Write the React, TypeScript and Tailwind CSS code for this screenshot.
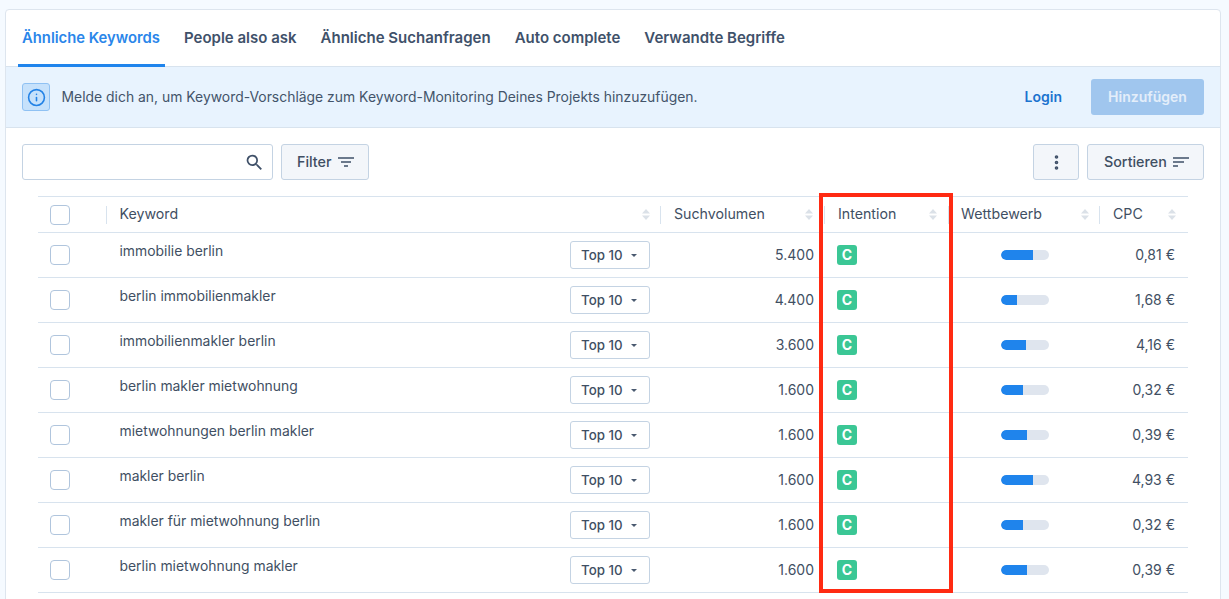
import { EllipsisVertical, Info } from "lucide-react";

const tabs = ["People also ask", "Ähnliche Suchanfragen", "Auto complete", "Verwandte Begriffe"];

const rows = [
  { keyword: "immobilie berlin", volume: "5.400", competition: 32, cpc: "0,81 €" },
  { keyword: "berlin immobilienmakler", volume: "4.400", competition: 16, cpc: "1,68 €" },
  { keyword: "immobilienmakler berlin", volume: "3.600", competition: 25, cpc: "4,16 €" },
  { keyword: "berlin makler mietwohnung", volume: "1.600", competition: 22, cpc: "0,32 €" },
  { keyword: "mietwohnungen berlin makler", volume: "1.600", competition: 26, cpc: "0,39 €" },
  { keyword: "makler berlin", volume: "1.600", competition: 32, cpc: "4,93 €" },
  { keyword: "makler für mietwohnung berlin", volume: "1.600", competition: 22, cpc: "0,32 €" },
  { keyword: "berlin mietwohnung makler", volume: "1.600", competition: 26, cpc: "0,39 €" },
];

const gridCols = "grid grid-cols-[69px_554px_164px_124px_151px_88px]";

function SortIcon() {
  return (
    <svg width="8" height="11" viewBox="0 0 8 11" className="shrink-0 fill-[#dbe1e8]">
      <path d="M4 0 8 4.5H0Z" />
      <path d="M4 11 0 6.5H8Z" />
    </svg>
  );
}

function SearchIcon() {
  return (
    <svg width="21" height="21" viewBox="0 0 24 24" className="fill-[#3f5068]">
      <path d="M15.5 14h-.79l-.28-.27A6.471 6.471 0 0 0 16 9.5 6.5 6.5 0 1 0 9.5 16c1.61 0 3.09-.59 4.23-1.57l.27.28v.79l5 4.99L20.49 19l-4.99-5zm-6 0C7.01 14 5 11.99 5 9.5S7.01 5 9.5 5 14 7.01 14 9.5 11.99 14 9.5 14z" />
    </svg>
  );
}

function FilterIcon() {
  return (
    <svg width="16" height="10" viewBox="0 0 16 10" className="stroke-[#3f5068]" strokeWidth="1.5" fill="none">
      <path d="M0 1h16M3 5h10M6 9h4" />
    </svg>
  );
}

function SortLinesIcon() {
  return (
    <svg width="16" height="10" viewBox="0 0 16 10" className="stroke-[#3f5068]" strokeWidth="1.5" fill="none">
      <path d="M0 1h16M0 5h11M0 9h5" />
    </svg>
  );
}

function Checkbox() {
  return <span className="block h-5 w-5 rounded-[4px] border border-[#b0c5dd] bg-white" />;
}

function HeaderCell({ label, className }: { label: string; className: string }) {
  return (
    <div className={`flex h-[18px] items-center justify-between ${className}`}>
      <span>{label}</span>
      <SortIcon />
    </div>
  );
}

export default function App() {
  return (
    <div className="relative h-[599px] overflow-hidden bg-[#f5faff] pl-[5px] pr-2 pt-[9px] font-['Inter','Liberation_Sans',sans-serif] text-[#3f4f63]">
      <div className="h-[640px] rounded-t-[4px] border border-[#dde5ee] bg-white">
        <div className="flex h-[57px] gap-6 border-b border-[#d8e3ee] pl-3">
          <div className="-mb-px -mr-[5px] flex w-[147px] items-center justify-start border-b-[3px] border-[#1f84ec] pl-1 pt-[3px] text-[14.8px] font-semibold text-[#2a86ea]">
            Ähnliche Keywords
          </div>
          {tabs.map((tab) => (
            <div key={tab} className="flex items-center text-[15px] font-semibold text-[#40516a]">
              {tab}
            </div>
          ))}
        </div>

        <div className="flex h-[61px] items-center border-b border-[#d8e3ee] bg-[#e8f3fe] px-4">
          <div className="flex h-7 w-7 items-center justify-center rounded-[3px] border border-[#8fc1f3] bg-[#c6e1fb]">
            <Info size={19} className="text-[#2382e6]" strokeWidth={2} />
          </div>
          <p className="ml-[11.5px] text-[13.92px] text-[#43546a]">
            Melde dich an, um Keyword-Vorschläge zum Keyword-Monitoring Deines Projekts hinzuzufügen.
          </p>
          <button className="ml-auto text-sm font-semibold text-[#1c73cf]">Login</button>
          <button className="ml-[29px] h-9 w-[113px] rounded-[3px] bg-[#a0c6ee] text-sm font-semibold text-[#e4eefa]">
            Hinzufügen
          </button>
        </div>

        <div className="flex items-center px-4 pt-4">
          <div className="flex h-9 w-[251px] items-center justify-end rounded-[3px] border border-[#c4d3e3] bg-white pr-[7px]">
            <SearchIcon />
          </div>
          <button className="ml-2 flex h-9 w-[88px] items-center gap-[6px] rounded-[3px] border border-[#c4d3e3] bg-[#f3f6fa] pl-[15px] text-[14.3px] font-medium">
            Filter
            <FilterIcon />
          </button>
          <button className="ml-auto flex h-9 w-[46px] items-center justify-center rounded-[3px] border border-[#c4d3e3] bg-[#f3f6fa]">
            <EllipsisVertical size={19} className="text-[#3f5068]" strokeWidth={2.6} />
          </button>
          <button className="ml-2 flex h-9 w-[117px] items-center gap-[6px] rounded-[3px] border border-[#c4d3e3] bg-[#f3f6fa] pl-4 text-[14.3px] font-medium">
            Sortieren
            <SortLinesIcon />
          </button>
        </div>

        <div className="ml-8 mt-4 w-[1150px] border-t border-[#d8e3ee] text-sm">
          <div className={`${gridCols} h-9 items-center border-b border-[#d8e3ee] text-[14.2px]`}>
            <div className="flex h-[18px] items-center border-r border-[#d8e3ee] pl-3">
              <Checkbox />
            </div>
            <HeaderCell label="Keyword" className="border-r border-[#d8e3ee] pl-[12.5px] pr-[10px]" />
            <HeaderCell label="Suchvolumen" className="border-r border-[#d8e3ee] pl-[13px] pr-[11px]" />
            <HeaderCell label="Intention" className="border-r border-[#d8e3ee] pl-[13px] pr-[11px]" />
            <HeaderCell label="Wettbewerb" className="border-r border-[#d8e3ee] pl-3 pr-[10px]" />
            <HeaderCell label="CPC" className="pl-[13px] pr-3" />
          </div>

          {rows.map((row) => (
            <div key={row.keyword} className={`${gridCols} h-[45px] items-center border-b border-[#d8e3ee]`}>
              <div className="pl-3">
                <Checkbox />
              </div>
              <div className="flex items-center justify-between pl-[12.5px] pr-[11px]">
                <span className="-mt-[6px] text-[13.9px]">{row.keyword}</span>
                <button className="flex h-7 w-20 items-center gap-2 rounded-[3px] border border-[#c4d3e3] bg-white pl-[10px] text-[13.3px] font-medium">
                  Top 10
                  <span className="h-0 w-0 border-x-[3.5px] border-t-[3.5px] border-x-transparent border-t-[#4a5a70]" />
                </button>
              </div>
              <div className="pr-[11px] text-right">{row.volume}</div>
              <div className="pl-3">
                <span className="flex h-5 w-5 items-center justify-center rounded-[3px] bg-[#3bc795] text-sm font-bold text-white">
                  C
                </span>
              </div>
              <div className="flex justify-center">
                <div className="h-[10px] w-12 overflow-hidden rounded-full bg-[#dfe5ee]">
                  <div className="h-full rounded-l-full bg-[#1f84ec]" style={{ width: row.competition }} />
                </div>
              </div>
              <div className="pr-[13px] text-right">{row.cpc}</div>
            </div>
          ))}
        </div>
      </div>

      <div className="absolute left-[819px] top-[193px] h-[400px] w-[134px] border-4 border-[#ff2a12]" />
    </div>
  );
}
